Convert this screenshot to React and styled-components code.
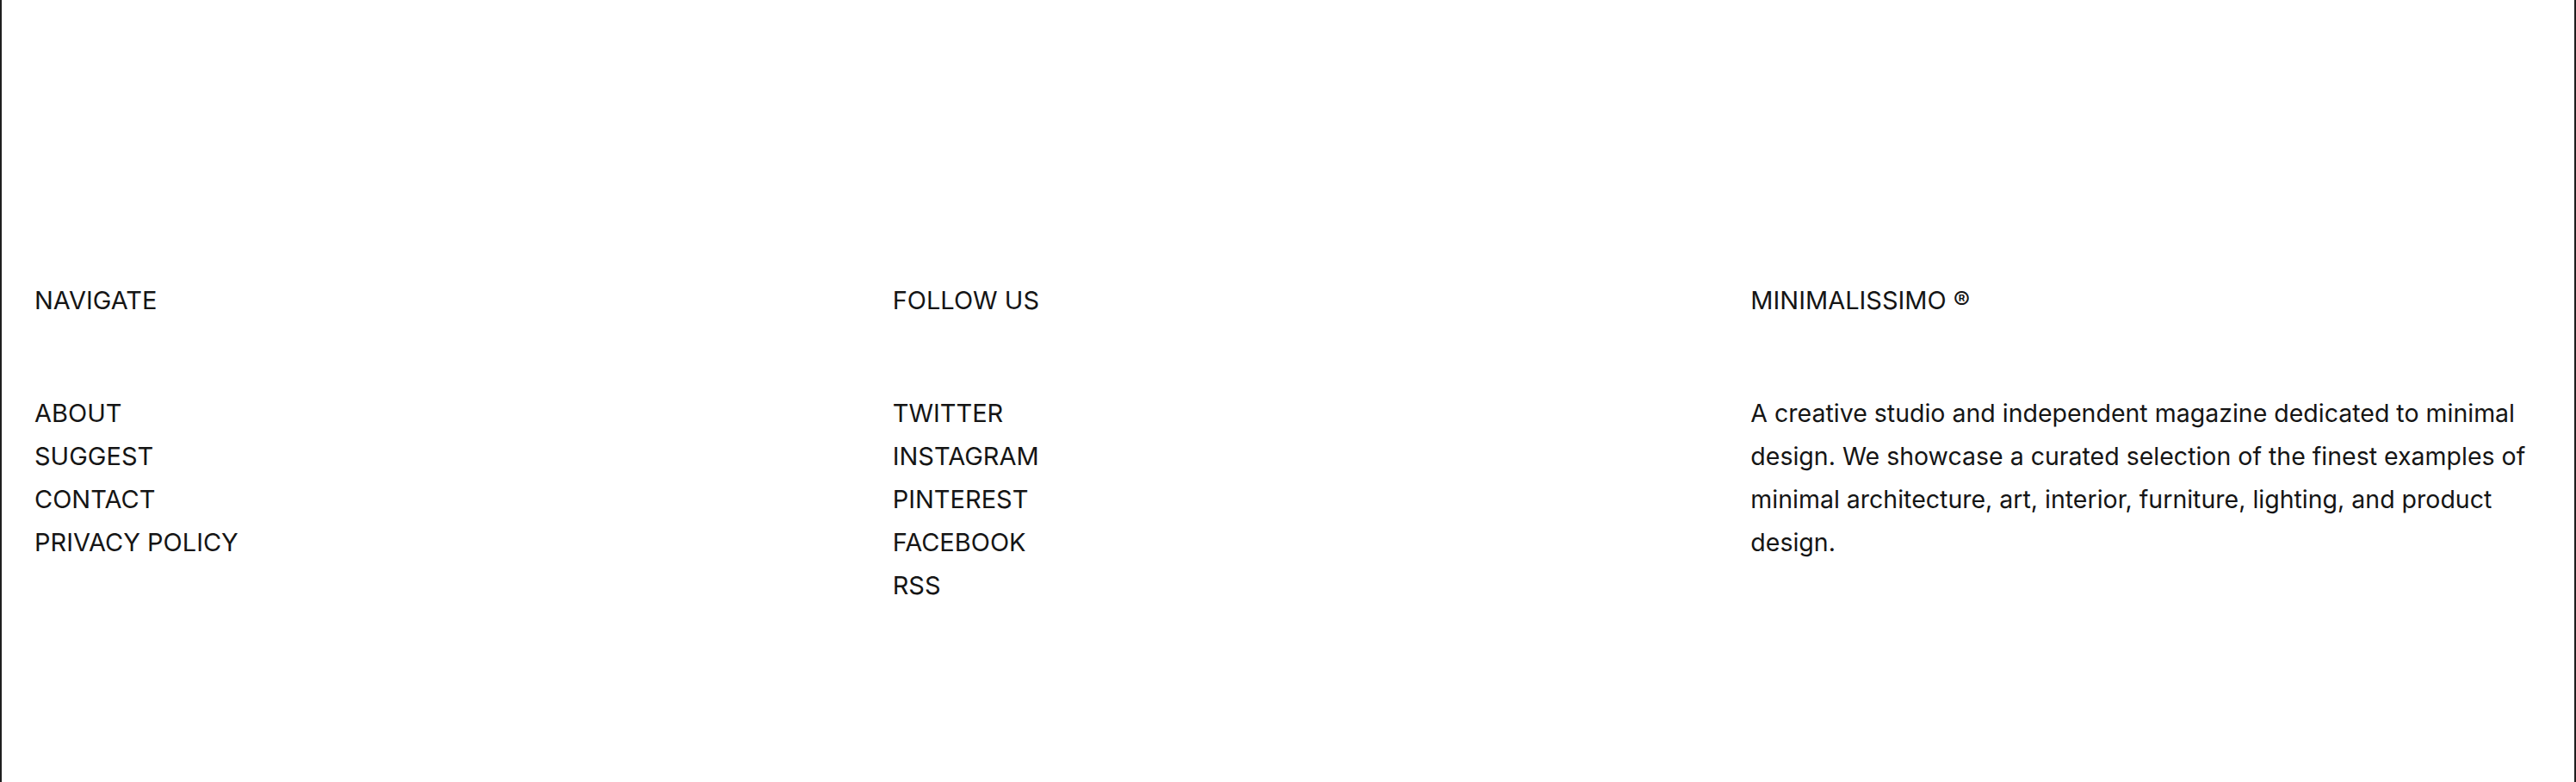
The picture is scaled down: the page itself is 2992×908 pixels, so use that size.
import React from 'react'
import styled, { createGlobalStyle } from 'styled-components'

const GlobalStyle = createGlobalStyle`
    html, body {
        margin: 0;
        padding: 0;
        background: #fff;
    }

    body {
        font-family: Inter, "Noto Sans", "Liberation Sans", sans-serif;
        color: #151515;
        -webkit-font-smoothing: antialiased;
    }
`;

const Footer = styled.footer`
    box-sizing: border-box;
    min-height: 100vh;
    padding: 324px 40px 0 38px;
    border-left: 2px solid #1e1e1e;
    border-right: 2px solid #1e1e1e;
    display: grid;
    grid-template-columns: repeat(3, 1fr);
    column-gap: 80px;
    align-items: start;
`;

const Column = styled.section`
    display: flex;
    flex-direction: column;
`;

const Heading = styled.h3`
    margin: 0 0 81px;
    font-size: 29px;
    font-weight: 400;
    line-height: 50px;
    text-transform: uppercase;
`;

const LinkList = styled.ul`
    list-style: none;
    margin: 0;
    padding: 0;
`;

const FooterLink = styled.a`
    display: block;
    font-size: 29px;
    line-height: 50px;
    color: inherit;
    text-decoration: none;
    text-transform: uppercase;
    cursor: pointer;

    &:hover {
        text-decoration: underline;
    }
`;

const About = styled.p`
    margin: 0;
    font-size: 28.5px;
    line-height: 50px;
`;

const navigate = ['About', 'Suggest', 'Contact', 'Privacy Policy'];
const follow = ['Twitter', 'Instagram', 'Pinterest', 'Facebook', 'RSS'];

const App = () => {
    return (
        <>
            <GlobalStyle />
            <Footer>
                <Column>
                    <Heading>Navigate</Heading>
                    <LinkList>
                        {navigate.map(item => (
                            <li key={item}><FooterLink href="#">{item}</FooterLink></li>
                        ))}
                    </LinkList>
                </Column>
                <Column>
                    <Heading>Follow us</Heading>
                    <LinkList>
                        {follow.map(item => (
                            <li key={item}><FooterLink href="#">{item}</FooterLink></li>
                        ))}
                    </LinkList>
                </Column>
                <Column>
                    <Heading>Minimalissimo ®</Heading>
                    <About>
                        A creative studio and independent magazine dedicated to minimal design.
                        We showcase a curated selection of the finest examples of minimal
                        architecture, art, interior, furniture, lighting, and product design.
                    </About>
                </Column>
            </Footer>
        </>
    );
}

export default App;
